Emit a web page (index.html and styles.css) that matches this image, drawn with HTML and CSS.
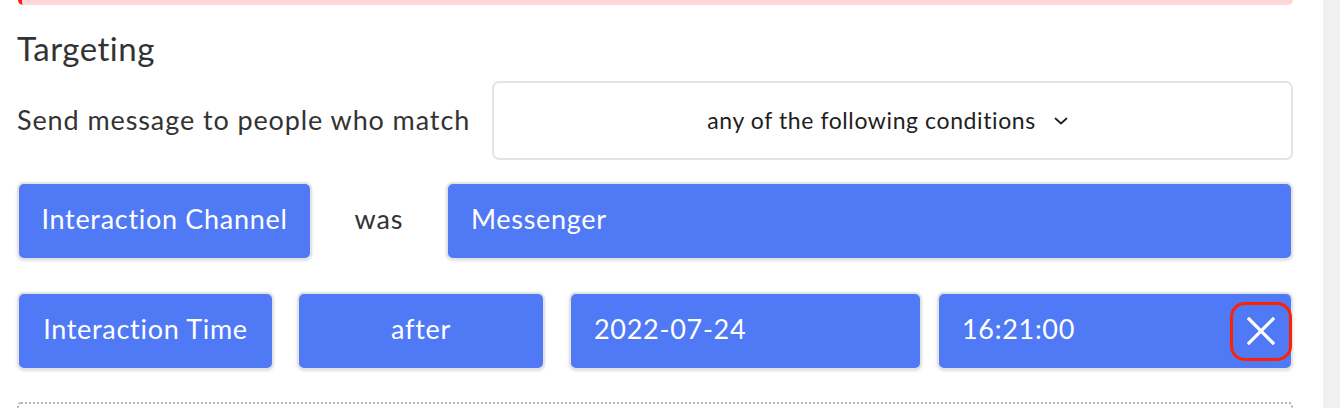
FILE: index.html
```html
<!DOCTYPE html>
<html lang="en">
<head>
<meta charset="utf-8">
<title>Targeting</title>
<link rel="stylesheet" href="styles.css">
</head>
<body>
<div class="page">
  <main class="main">
    <div class="alert"></div>
    <h2 class="title">Targeting</h2>
    <div class="match-row">
      <span class="match-label">Send message to people who match</span>
      <div class="select">
        <span>any of the following conditions</span>
        <svg class="chev" width="14" height="8" viewBox="0 0 14 8"><path d="M1.5 1.5 L7 6.5 L12.5 1.5" fill="none" stroke="#222" stroke-width="1.8" stroke-linecap="round" stroke-linejoin="round"/></svg>
      </div>
    </div>
    <div class="cond-row row-a">
      <div class="chip chip-channel">Interaction Channel</div>
      <span class="op">was</span>
      <div class="chip chip-field chip-grow">Messenger</div>
    </div>
    <div class="cond-row row-b">
      <div class="chip chip-time">Interaction Time</div>
      <div class="chip chip-after">after</div>
      <div class="chip chip-field chip-date">2022-07-24</div>
      <div class="chip chip-field chip-grow chip-clock">
        <span>16:21:00</span>
        <button class="close" aria-label="Remove">
          <svg width="28" height="28" viewBox="0 0 28 28"><path d="M2 2 L26 26 M26 2 L2 26" stroke="#fff" stroke-width="3.2" stroke-linecap="square"/></svg>
        </button>
      </div>
    </div>
    <div class="dropzone"></div>
  </main>
  <div class="scrollbar"></div>
</div>
</body>
</html>
```
FILE: styles.css
```css
* { box-sizing: border-box; }
html, body { margin: 0; padding: 0; }
body {
  font-family: "Lato", "Open Sans", sans-serif;
  color: #333;
  background: #fff;
  overflow: hidden;
}
.page {
  display: flex;
  width: 1340px;
  height: 408px;
  overflow: hidden;
}
.main {
  flex: 1;
  padding: 0 30px 0 17px;
}
.scrollbar {
  width: 17px;
  background: #f0f0f0;
}
.alert {
  height: 5px;
  margin-left: 1px;
  background: #ffd6d6;
  border-left: 4px solid #ff1a1a;
  border-radius: 0 0 10px 10px;
}
.title {
  margin: 23px 0 0;
  font-size: 33px;
  font-weight: 400;
  letter-spacing: 0.5px;
  line-height: 40px;
  color: #333;
}
.match-row {
  display: flex;
  align-items: center;
  margin-top: 13px;
}
.match-label {
  font-size: 27px;
  letter-spacing: 0.9px;
  color: #333;
  width: 475px;
  flex: none;
  white-space: nowrap;
  padding-bottom: 2px;
}
.select {
  flex: 1;
  height: 79px;
  border: 2px solid #e4e4e4;
  border-radius: 7px;
  display: flex;
  align-items: center;
  justify-content: center;
  gap: 18px;
  font-size: 23px;
  letter-spacing: 0.6px;
  color: #1e1e1e;
  padding: 0 10px 2px 0;
}
.chev { margin-top: 2px; }
.cond-row {
  display: flex;
  align-items: center;
}
.row-a { margin-top: 22px; }
.row-b { margin-top: 32px; }
.chip {
  height: 78px;
  background: #5079f5;
  color: #fff;
  border: 2px solid #e4e4e4;
  border-radius: 7px;
  box-shadow: 0 1px 3px rgba(0,0,0,0.12);
  display: flex;
  align-items: center;
  justify-content: center;
  font-size: 27px;
  letter-spacing: 0.7px;
  padding: 0 23px 5px;
  white-space: nowrap;
}
.chip-channel { width: 295px; padding: 0 10px 5px; }
.op {
  width: 134px;
  text-align: center;
  font-size: 27px;
  letter-spacing: 0.9px;
  color: #333;
  padding-bottom: 5px;
}
.chip-field { justify-content: flex-start; }
.chip-grow { flex: 1; }
.chip-time { width: 257px; padding: 0 10px 5px; }
.chip-after { width: 248px; margin-left: 23px; }
.chip-date { width: 353px; margin-left: 24px; }
.chip-clock { margin-left: 15px; padding-right: 0; }
.close {
  margin-left: auto;
  width: 62px;
  height: 59px;
  border: 3.5px solid #ff2200;
  border-radius: 15px;
  background: transparent;
  display: flex;
  align-items: center;
  justify-content: center;
  padding: 0;
  margin-right: -1px;
  margin-top: 5px;
}
.dropzone {
  margin-top: 32px;
  height: 60px;
  border: 2px dotted #b5b5b5;
  border-radius: 4px;
}
```
